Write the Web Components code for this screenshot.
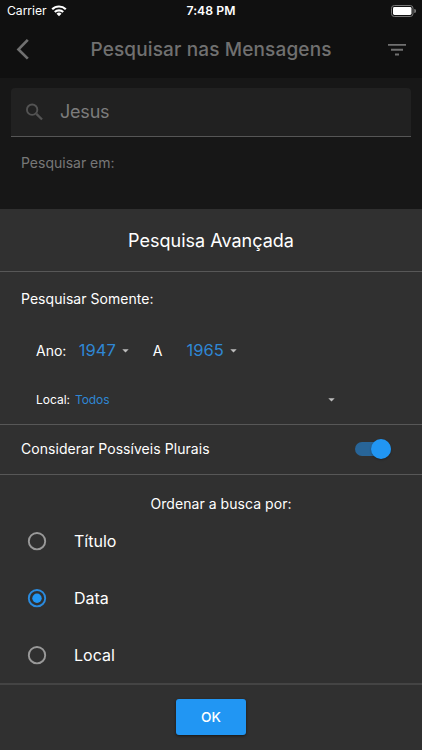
<!DOCTYPE html>
<html lang="pt">
<head>
<meta charset="utf-8">
<title>Pesquisar nas Mensagens</title>
<style>
html,body{margin:0;height:100%;background:#303030}
body{font-family:Inter,"Liberation Sans",sans-serif}
</style>
</head>
<body>
<search-screen></search-screen>
<script>
function define(name, html) {
  const template = document.createElement('template');
  template.innerHTML = html;
  customElements.define(name, class extends HTMLElement {
    constructor() {
      super();
      this.attachShadow({ mode: 'open' }).append(template.content.cloneNode(true));
    }
  });
}

define('status-bar', `
<style>
:host{display:grid;grid-template-columns:1fr auto 1fr;align-items:center;height:22px;box-sizing:border-box;padding:0 6px 0 7px;color:#fff;font-size:12.2px;line-height:22px}
.left{display:flex;align-items:center;gap:4px}
.carrier{letter-spacing:-.06px}
.time{font-weight:600;letter-spacing:.05px;margin-right:1px}
svg{display:block}
.battery{justify-self:end}
</style>
<div class="left"><span class="carrier">Carrier</span>
<svg width="16" height="12" viewBox="0 0 16 12"><g fill="none" stroke="#fff" stroke-width="2.2"><path d="M1.2 4.3a9.7 9.7 0 0 1 13.6 0"/><path d="M3.8 7.1a5.9 5.9 0 0 1 8.4 0"/></g><path fill="#fff" d="M5.5 8.8a3.5 3.5 0 0 1 5 0L8 11.3z"/></svg></div>
<span class="time">7:48 PM</span>
<svg class="battery" width="25" height="12" viewBox="0 0 25 12"><rect x=".5" y=".5" width="21.5" height="11" rx="2.8" fill="none" stroke="#777"/><rect x="2" y="2" width="18.5" height="8" rx="1.4" fill="#fff"/><path d="M23.2 4a2 2 0 0 1 0 4z" fill="#777"/></svg>
`);

define('nav-bar', `
<style>
:host{display:grid;grid-template-columns:1fr auto 1fr;align-items:center;height:55px;box-sizing:border-box;padding:0 16px;color:#707070}
h1{margin:0;font-size:19px;line-height:24px;font-weight:500;letter-spacing:.14px;white-space:nowrap}
svg{display:block}
.filter{justify-self:end}
</style>
<svg width="14" height="22" viewBox="0 .6 14 22"><path d="M11.8 1.5 2.5 11l9.3 9.2" fill="none" stroke="currentColor" stroke-width="2.7"/></svg>
<h1><slot></slot></h1>
<svg class="filter" width="18" height="12" viewBox="0 .6 18 12"><path d="M0 1.5h18M3 6.3h12M7 11.1h4" stroke="currentColor" stroke-width="1.9"/></svg>
`);

define('search-field', `
<style>
:host{display:flex;align-items:center;gap:17px;height:49px;box-sizing:border-box;padding-left:15px;background:#212121;border-bottom:1px solid #565656;border-radius:4px 4px 0 0;color:#7c7c7c;font-size:18px}
svg{display:block;color:#535353}
span{letter-spacing:-.2px;padding-bottom:2px}
</style>
<svg width="17" height="18" viewBox="0 0 18 18"><circle cx="6.5" cy="6.5" r="5.5" fill="none" stroke="currentColor" stroke-width="2"/><path d="m11 11 6 6" fill="none" stroke="currentColor" stroke-width="2.4"/></svg>
<span><slot></slot></span>
`);

define('drop-arrow', `
<style>:host{display:block;width:7px;height:4px}svg{display:block}</style>
<svg width="7" height="4" viewBox="0 0 7 4"><path d="M.3.3h6.4L3.5 3.5z" fill="#bdbdbd"/></svg>
`);

define('year-select', `
<style>
:host{display:flex;align-items:center;gap:6px;color:#2f87d4;font-size:16.5px}
drop-arrow{padding-top:2px}
</style>
<span><slot></slot></span><drop-arrow></drop-arrow>
`);

define('toggle-switch', `
<style>
:host{display:flex;align-items:center;justify-content:flex-end;width:36px;height:14px;border-radius:7px;background:#286598}
span{width:20px;height:20px;flex:none;border-radius:50%;background:#2196f3;box-shadow:0 1px 2px #0004}
</style>
<span></span>
`);

define('radio-option', `
<style>
:host{display:flex;align-items:center;height:57px;gap:27px;padding-left:27px;color:#fff;font-size:16px}
svg{display:block;color:#999}
circle{fill:none;stroke:currentColor;stroke-width:1.9}
.dot{display:none}
:host([checked]) svg{color:#2b8bde}
:host([checked]) .dot{display:inline;fill:#2196f3;stroke:none}
</style>
<svg width="20" height="19" viewBox="0 0 20 19"><circle cx="10" cy="9.2" r="8.2"/><circle class="dot" cx="10" cy="9.2" r="4.7"/></svg><span><slot></slot></span>
`);

define('sheet-section', `
<style>:host{display:block;box-sizing:border-box;border-bottom:1px solid #575757}</style>
<slot></slot>
`);

define('advanced-search', `
<style>
:host{display:flex;flex-direction:column;flex:1;background:#303030;color:#fff;font-size:14px}
h2{margin:0;font-size:18px;font-weight:400;height:62px;line-height:64px;text-align:center}
.only{padding:17px 21px 0;line-height:20px}
.only span{letter-spacing:.04px}
.years{display:flex;align-items:center;height:24px;padding:29px 0 0 36px}
.place{display:flex;align-items:center;height:20px;padding:27px 84px 0 36px;font-size:12px}
.todos{color:#2f87d4;margin-left:5px;letter-spacing:-.1px}
.place drop-arrow{margin-left:auto;margin-right:3.5px;padding-top:2px}
.plurals{display:flex;align-items:center;justify-content:space-between;height:47px;padding:0 31px 2px 21px;letter-spacing:.05px}
.order{line-height:20px;text-align:center;padding:19px 0 0 20px;letter-spacing:.05px}
.options{margin-top:-1.5px}
.footer{display:flex;justify-content:center;padding-top:14px}
button{width:70px;height:36px;border:0;border-radius:3px;background:#2196f3;color:#fff;font:500 13.7px/36px Inter,sans-serif;padding:0;box-shadow:0 1px 3px #0008}
</style>
<sheet-section><h2><span>Pesquisa Avançada</span></h2></sheet-section>
<sheet-section style="height:153px">
<div class="only"><span>Pesquisar Somente:</span></div>
<div class="years"><span>Ano:</span><year-select style="margin-left:12.5px">1947</year-select><span style="margin-left:24px">A</span><year-select style="margin-left:24px">1965</year-select></div>
<div class="place"><span>Local:</span><span class="todos">Todos</span><drop-arrow></drop-arrow></div>
</sheet-section>
<sheet-section><div class="plurals"><span>Considerar Possíveis Plurais</span><toggle-switch></toggle-switch></div></sheet-section>
<sheet-section style="height:210px;border-bottom:2px solid #444">
<div class="order"><span>Ordenar a busca por:</span></div>
<div class="options"><radio-option>Título</radio-option><radio-option checked>Data</radio-option><radio-option>Local</radio-option></div>
</sheet-section>
<div class="footer"><button><span>OK</span></button></div>
`);

define('search-screen', `
<style>
:host{display:flex;flex-direction:column;width:422px;height:750px;overflow:hidden;background:#171717}
.top{background:#101010;height:78px}
.body{height:131px;box-sizing:border-box;padding:10px 11px 0}
p{margin:16px 10px 0;font-size:14px;line-height:20px;color:#777}
</style>
<div class="top"><status-bar></status-bar><nav-bar>Pesquisar nas Mensagens</nav-bar></div>
<div class="body"><search-field>Jesus</search-field><p><span>Pesquisar em:</span></p></div>
<advanced-search></advanced-search>
`);
</script>
</body>
</html>
